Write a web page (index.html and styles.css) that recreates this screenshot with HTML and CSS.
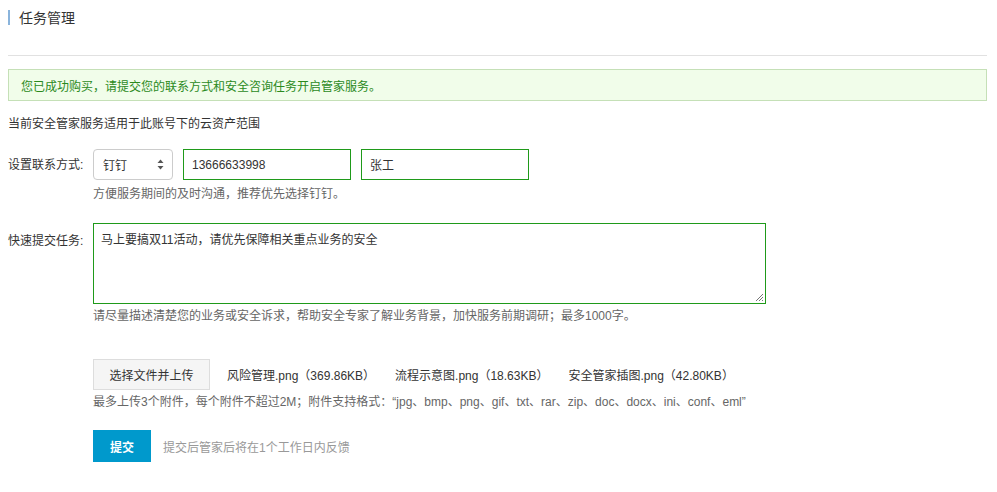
FILE: index.html
```html
<!DOCTYPE html>
<html lang="zh">
<head>
<meta charset="utf-8">
<link rel="stylesheet" href="styles.css">
</head>
<body>
<div class="page">
  <div class="title"><span class="bar"></span><span>任务管理</span></div>
  <div class="divider"></div>
  <div class="alert">您已成功购买，请提交您的联系方式和安全咨询任务开启管家服务。</div>
  <div class="scope">当前安全管家服务适用于此账号下的云资产范围</div>

  <div class="row contact">
    <div class="label">设置联系方式:</div>
    <div class="field">
      <div class="controls">
        <div class="select"><span>钉钉</span>
          <svg class="arrows" width="7" height="11" viewBox="0 0 7 11"><path d="M3.5 0.5 L6.5 4 L0.5 4 Z" fill="#555"/><path d="M3.5 10.5 L6.5 7 L0.5 7 Z" fill="#555"/></svg>
        </div>
        <div class="input">13666633998</div>
        <div class="input">张工</div>
      </div>
      <div class="hint contact-hint">方便服务期间的及时沟通，推荐优先选择钉钉。</div>
    </div>
  </div>

  <div class="row task">
    <div class="label">快速提交任务:</div>
    <div class="field">
      <div class="textarea">马上要搞双11活动，请优先保障相关重点业务的安全
        <svg class="grip" width="9" height="9" viewBox="0 0 9 9"><path d="M8 1 L1 8 M8 4 L4 8 M8 7 L7 8" stroke="#777" stroke-width="1"/></svg>
      </div>
      <div class="hint">请尽量描述清楚您的业务或安全诉求，帮助安全专家了解业务背景，加快服务前期调研；最多1000字。</div>
    </div>
  </div>

  <div class="upload">
    <div class="files">
      <div class="btn-upload">选择文件并上传</div>
      <span class="file">风险管理.png（369.86KB）</span>
      <span class="file">流程示意图.png（18.63KB）</span>
      <span class="file">安全管家插图.png（42.80KB）</span>
    </div>
    <div class="hint">最多上传3个附件，每个附件不超过2M；附件支持格式：“jpg、bmp、png、gif、txt、rar、zip、doc、docx、ini、conf、eml”</div>
  </div>

  <div class="submit-row">
    <div class="btn-submit">提交</div>
    <span class="note">提交后管家后将在1个工作日内反馈</span>
  </div>
</div>
</body>
</html>
```
FILE: styles.css
```css
* { box-sizing: border-box; }
html, body { margin: 0; padding: 0; background: #fff; }
body {
  font-family: "Liberation Sans", "Noto Sans CJK SC", sans-serif;
  font-size: 12px;
  color: #333;
}
.page { padding: 9px 10px 0 8px; width: 997px; }
.title { display: flex; align-items: center; height: 16px; font-size: 14px; color: #333; }
.title .bar { width: 2px; height: 15px; background: #8ab4dc; margin-right: 9px; }
.divider { height: 1px; background: #e1e1e1; margin-top: 30px; }
.alert {
  margin-top: 13px;
  height: 32px;
  border: 1px solid #c5e0b7;
  background: #f1fdea;
  color: #2b8a1d;
  padding-left: 12px;
  display: flex;
  align-items: center;
}
.scope { margin-top: 15px; line-height: 16px; }
.row { display: flex; }
.label { width: 85px; flex: none; color: #333; }
.contact { margin-top: 17px; }
.contact .label { padding-top: 7px; line-height: 18px; }
.controls { display: flex; gap: 10px; }
.select {
  width: 80px; height: 31px;
  border: 1px solid #ccc; border-radius: 4px;
  display: flex; align-items: center; justify-content: space-between;
  padding: 0 8px 0 9px;
  color: #333;
}
.input {
  width: 168px; height: 31px;
  border: 1px solid #1f9a1a;
  padding-left: 8px;
  display: flex; align-items: center;
  color: #333;
}
.hint { color: #666; margin-top: 4px; line-height: 16px; }
.contact-hint { margin-top: 6px; }
.task { margin-top: 21px; }
.task .label { padding-top: 10px; line-height: 16px; }
.textarea {
  position: relative;
  width: 673px; height: 81px;
  border: 1px solid #1f9a1a;
  padding: 8px 7px;
  line-height: 16px;
}
.grip { position: absolute; right: 1px; bottom: 1px; }
.task .hint { margin-top: 4px; }
.upload { margin-left: 85px; margin-top: 35px; }
.files { display: flex; align-items: center; }
.btn-upload {
  width: 117px; height: 31px;
  border: 1px solid #ddd; background: #f5f5f5;
  display: flex; align-items: center; justify-content: center;
  color: #333;
  margin-right: 17px;
}
.file { margin-right: 20px; color: #333; }
.upload .hint { margin-top: 4px; }
.submit-row { margin-left: 85px; margin-top: 20px; display: flex; align-items: center; }
.btn-submit {
  width: 58px; height: 32px;
  background: #0099cc; color: #fff; font-weight: bold;
  display: flex; align-items: center; justify-content: center;
  margin-right: 12px;
}
.note { color: #999; }
```
